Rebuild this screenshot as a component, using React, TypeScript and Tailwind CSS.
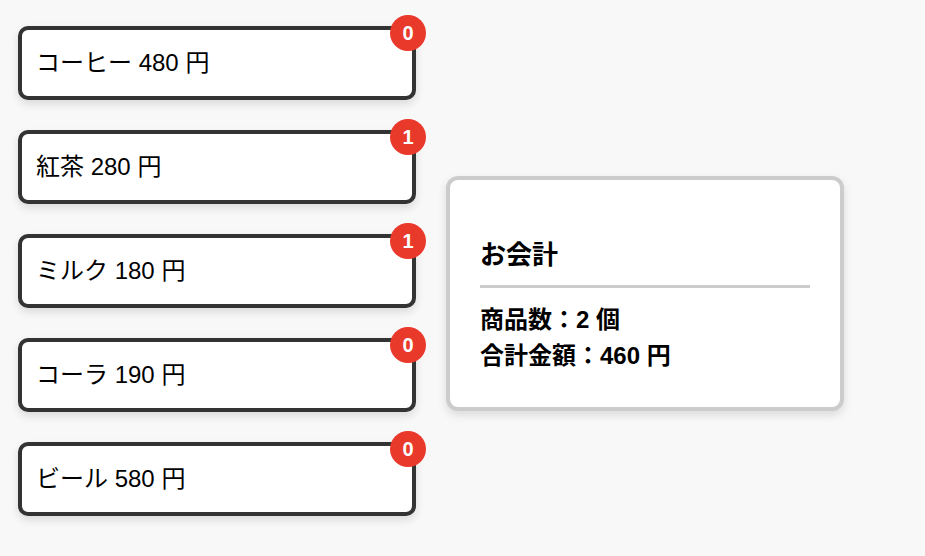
import React from "react";

const items = [
  { name: "コーヒー", price: 480, count: 0 },
  { name: "紅茶", price: 280, count: 1 },
  { name: "ミルク", price: 180, count: 1 },
  { name: "コーラ", price: 190, count: 0 },
  { name: "ビール", price: 580, count: 0 },
];

export default function App() {
  const font = { fontFamily: '"Liberation Sans", "Noto Sans CJK JP", sans-serif' };
  return (
    <div className="min-h-[556px] w-full bg-[#f8f8f8] text-black" style={font}>
      <div className="flex items-start gap-[30px] pl-[18px] pt-[26px] pb-[40px]">
        <div className="flex flex-col gap-[30px]">
          {items.map((it) => (
            <div
              key={it.name}
              className="relative w-[398px] h-[74px] rounded-[10px] border-[4px] border-[#333] bg-white pl-[14px] pr-[16px] flex items-center shadow-[0_4px_8px_rgba(0,0,0,0.12)]"
            >
              <span className="text-[24px] leading-[36px]">
                {it.name} {it.price} 円
              </span>
              <div className="absolute -top-[15px] -right-[14px] w-[36px] h-[36px] rounded-full bg-[#e8392b] flex items-center justify-center text-white font-bold text-[20px] leading-none">
                {it.count}
              </div>
            </div>
          ))}
        </div>
        <div className="mt-[150px] w-[398px] rounded-[12px] border-[4px] border-[#ccc] bg-white px-[30px] pt-[30px] pb-[33px] shadow-[0_4px_10px_rgba(0,0,0,0.12)]">
          <h2 className="mt-[26px] mb-[10px] text-[26px] leading-[39px] font-bold">お会計</h2>
          <div className="h-[3px] bg-[#ccc]" />
          <div className="mt-[14px] text-[24px] leading-[36px] font-bold">
            <div>商品数：2 個</div>
            <div>合計金額：460 円</div>
          </div>
        </div>
      </div>
    </div>
  );
}
